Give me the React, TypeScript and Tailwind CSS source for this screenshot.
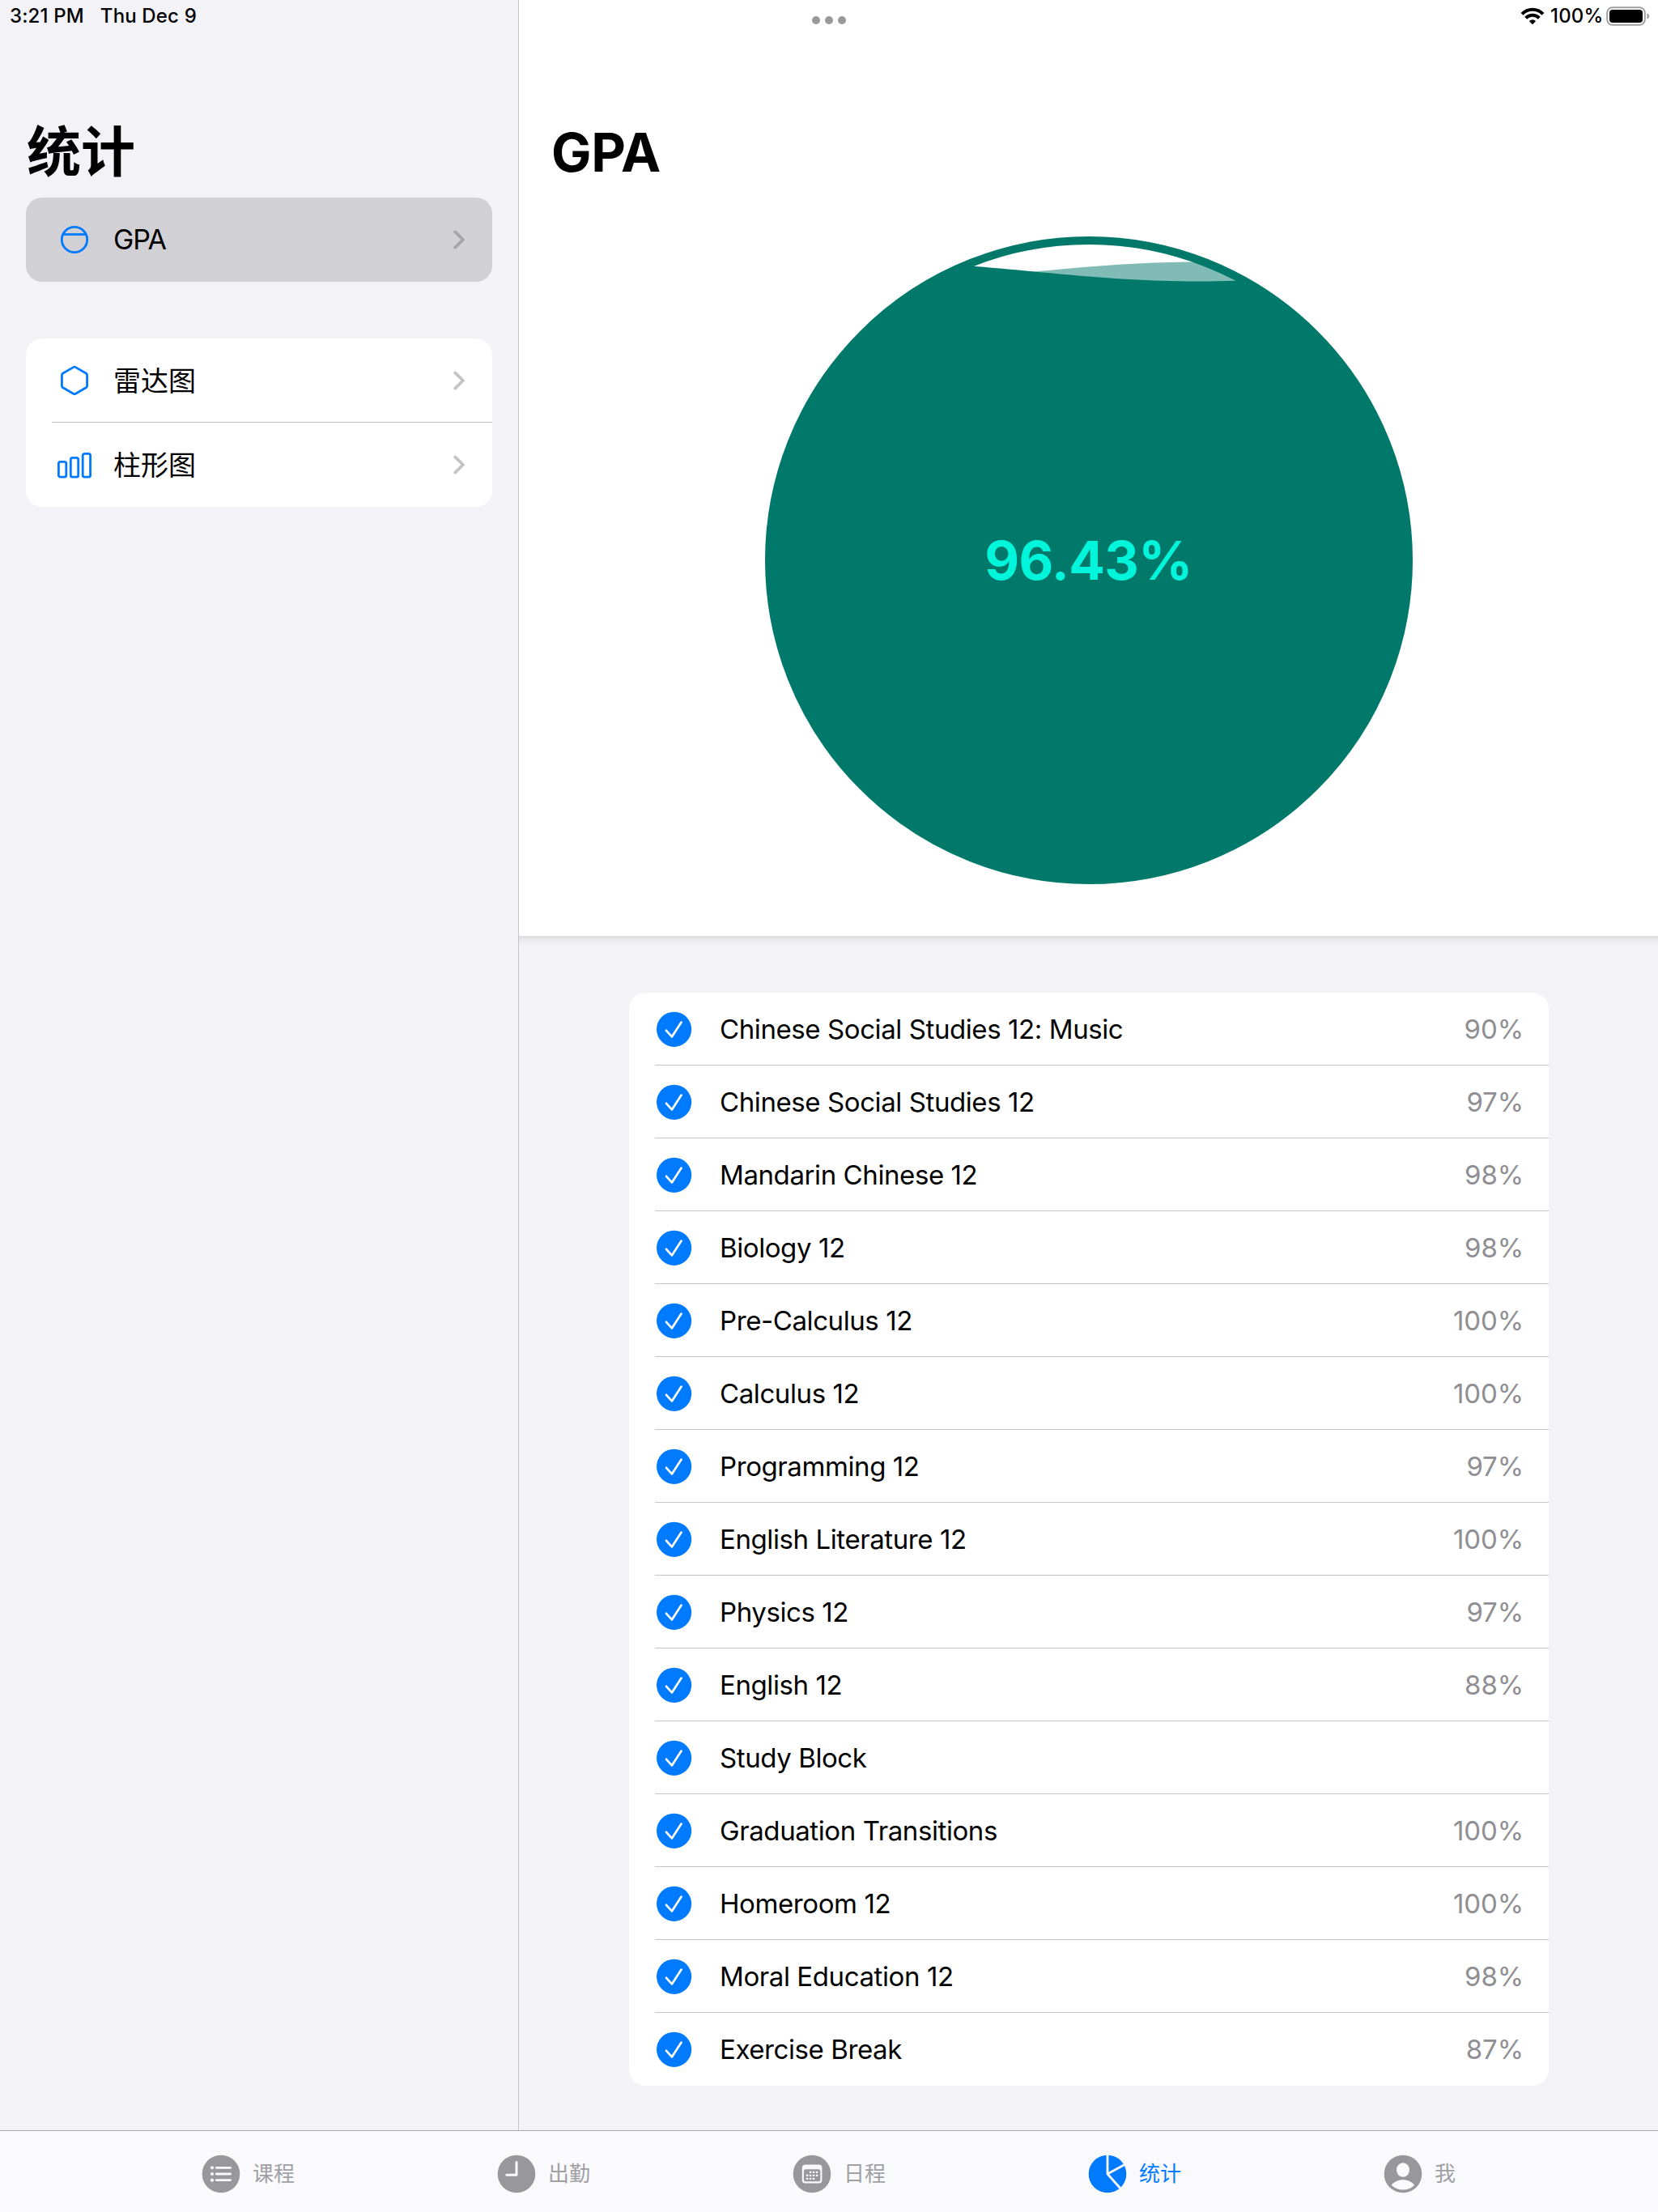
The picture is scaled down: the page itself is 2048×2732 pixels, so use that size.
import type { ReactNode } from "react";

const courses: [string, string][] = [
  ["Chinese Social Studies 12: Music", "90%"],
  ["Chinese Social Studies 12", "97%"],
  ["Mandarin Chinese 12", "98%"],
  ["Biology 12", "98%"],
  ["Pre-Calculus 12", "100%"],
  ["Calculus 12", "100%"],
  ["Programming 12", "97%"],
  ["English Literature 12", "100%"],
  ["Physics 12", "97%"],
  ["English 12", "88%"],
  ["Study Block", ""],
  ["Graduation Transitions", "100%"],
  ["Homeroom 12", "100%"],
  ["Moral Education 12", "98%"],
  ["Exercise Break", "87%"],
];

function Chevron({ color }: { color: string }) {
  return (
    <svg width="16" height="26" viewBox="0 0 16 26" fill="none" stroke={color} strokeWidth="3.8" strokeLinecap="round" strokeLinejoin="round">
      <path d="M2.2 3.4 L12 13 L2.2 22.6" />
    </svg>
  );
}

function CircleIcon() {
  return (
    <svg width="44" height="44" viewBox="0 0 44 44" fill="none" stroke="#007aff" strokeWidth="2.8">
      <circle cx="22" cy="22" r="15.7" />
      <path d="M8 15.5H36" />
    </svg>
  );
}

function HexagonIcon() {
  return (
    <svg width="44" height="44" viewBox="0 0 44 44" fill="none" stroke="#007aff" strokeWidth="2.8" strokeLinejoin="round">
      <path d="M20.6 5.6Q22 4.8 23.4 5.6L36.2 13Q37.6 13.8 37.6 15.4V28.4Q37.6 30 36.2 30.8L23.4 38.2Q22 39 20.6 38.2L7.8 30.8Q6.4 30 6.4 28.4V15.4Q6.4 13.8 7.8 13Z" />
    </svg>
  );
}

function BarsIcon() {
  return (
    <svg width="44" height="44" viewBox="0 0 44 44" fill="none" stroke="#007aff" strokeWidth="2.8">
      <rect x="2.4" y="18.3" width="9.4" height="18.9" rx="2.2" />
      <rect x="17.3" y="13.3" width="9.4" height="23.9" rx="2.2" />
      <rect x="32.2" y="8.3" width="9.4" height="28.9" rx="2.2" />
    </svg>
  );
}

function MenuRow({ icon, label, chevron }: { icon: ReactNode; label: ReactNode; chevron: string }) {
  return (
    <div className="flex h-[104px] items-center pl-[38px] pr-[32px]">
      {icon}
      <span className="ml-[26px] flex-1 text-[34px] leading-[48px]">{label}</span>
      <Chevron color={chevron} />
    </div>
  );
}

/* Liquid surface: a sine curve across the 800px bowl, closed at the bottom. */
function wavePath(amplitude: number) {
  const points: string[] = [];
  for (let x = 0; x <= 800; x += 10) {
    const y = 43.5 + amplitude * Math.sin((2 * Math.PI * (x - 333)) / 800);
    points.push(`${x} ${y.toFixed(2)}`);
  }
  return `M${points.join("L")}V800H0Z`;
}

function Gauge() {
  return (
    <svg width="800" height="800" viewBox="0 0 800 800">
      <defs>
        <clipPath id="bowl">
          <circle cx="400" cy="400" r="392" />
        </clipPath>
      </defs>
      <g clipPath="url(#bowl)">
        <path d={wavePath(-12)} fill="#80bcb5" />
        <path d={wavePath(12)} fill="#00796b" />
      </g>
      <circle cx="400" cy="400" r="395" fill="none" stroke="#00796b" strokeWidth="10" />
    </svg>
  );
}

function CheckIcon() {
  return (
    <svg width="44" height="44" viewBox="0 0 44 44" fill="none">
      <circle cx="21.6" cy="22.3" r="21.6" fill="#007aff" />
      <path d="M12 23.8L18.9 31.4L30.6 13.6" stroke="#fff" strokeWidth="2.7" strokeLinecap="round" strokeLinejoin="round" />
    </svg>
  );
}

const GRAY = "#98979c";
const BAR = "#fafafd";

function ListIcon() {
  return (
    <svg width="48" height="48" viewBox="0 0 48 48">
      <circle cx="24" cy="24" r="23.3" fill={GRAY} />
      {[16.3, 24, 31.7].map((y) => (
        <g key={y}>
          <circle cx="13" cy={y} r="2.1" fill={BAR} />
          <path d={`M18.3 ${y}H35.5`} stroke={BAR} strokeWidth="2.8" strokeLinecap="round" />
        </g>
      ))}
    </svg>
  );
}

function ClockIcon() {
  return (
    <svg width="48" height="48" viewBox="0 0 48 48">
      <circle cx="24" cy="24" r="23.3" fill={GRAY} />
      <path d="M24 9.5V25.3H11.8" fill="none" stroke={BAR} strokeWidth="3" strokeLinecap="round" strokeLinejoin="round" />
    </svg>
  );
}

function CalendarIcon() {
  const dots: [number, number][] = [
    [22, 22], [26, 22], [30, 22],
    [18, 26], [22, 26], [26, 26], [30, 26],
    [18, 30], [22, 30], [26, 30],
  ];
  return (
    <svg width="48" height="48" viewBox="0 0 48 48">
      <circle cx="24" cy="24" r="23.3" fill={GRAY} />
      <rect x="11.8" y="12.4" width="24.6" height="23" rx="4" fill={BAR} />
      <rect x="13.9" y="18.3" width="20.4" height="15" rx="2.2" fill={GRAY} />
      {dots.map(([x, y]) => (
        <rect key={`${x}-${y}`} x={x - 1.1} y={y - 1.2} width="2.3" height="2.3" rx="0.5" fill={BAR} />
      ))}
    </svg>
  );
}

function PieIcon() {
  return (
    <svg width="48" height="48" viewBox="0 0 48 48">
      <circle cx="24" cy="24" r="23.3" fill="#007aff" />
      <path d="M24 0V24L46 12M24 24L41 43" fill="none" stroke={BAR} strokeWidth="2.8" strokeLinejoin="round" />
    </svg>
  );
}

function PersonIcon() {
  return (
    <svg width="48" height="48" viewBox="0 0 48 48">
      <circle cx="24" cy="24" r="23.3" fill={GRAY} />
      <ellipse cx="24" cy="19" rx="8" ry="8.8" fill={BAR} />
      <path d="M9.8 37.8C13 33.8 18 31.3 24 31.3S35 33.8 38.2 37.8C34.8 41.5 29.8 43.6 24 43.6S13.2 41.5 9.8 37.8Z" fill={BAR} />
    </svg>
  );
}

const tabs: { label: string; icon: ReactNode; active?: boolean }[] = [
  { label: "课程", icon: <ListIcon /> },
  { label: "出勤", icon: <ClockIcon /> },
  { label: "日程", icon: <CalendarIcon /> },
  { label: "统计", icon: <PieIcon />, active: true },
  { label: "我", icon: <PersonIcon /> },
];

function StatusIcons() {
  return (
    <div className="flex h-[40px] items-center justify-end pr-[9px]">
      <svg width="30" height="22" viewBox="0 0 30 22" fill="none" stroke="#000" strokeWidth="4">
        <path d="M2 8.4C9.3 1 20.7 1 28 8.4" />
        <path d="M6.7 13.2C11.4 8.6 18.6 8.6 23.3 13.2" />
        <path d="M15 21.2L10.9 17Q15 13.6 19.1 17Z" fill="#000" stroke="none" />
      </svg>
      <span className="ml-[7px] w-[68px] text-[24px] font-medium leading-[40px] tracking-[0.2px]">100%</span>
      <svg width="56" height="26" viewBox="0 0 56 26">
        <rect x="2.2" y="2.2" width="46.6" height="21.6" rx="6.5" fill="none" stroke="#a0a0a0" strokeWidth="2" />
        <rect x="5" y="5" width="41" height="16" rx="4" fill="#000" />
        <path d="M51.5 9.3Q54.3 10.4 54.3 13T51.5 16.7Z" fill="#a0a0a0" />
      </svg>
    </div>
  );
}

export default function App() {
  return (
    <div className="flex h-[2732px] w-[2048px] flex-col overflow-hidden bg-[#f2f2f7] font-['Inter','Noto_Sans_CJK_SC',sans-serif] text-black">
      <div className="flex h-[2631px]">
        <aside className="w-[641px] shrink-0 border-r border-[#c6c6c8] px-[32px]">
          <div className="-ml-[20px] flex h-[40px] items-center gap-[20px] text-[24px] font-medium leading-[40px] tracking-[0.15px]">
            <span>3:21 PM</span>
            <span>Thu Dec 9</span>
          </div>
          <h1 className="ml-px mt-[100px] h-[104px] text-[67px] font-bold leading-[96px]">统计</h1>
          <div className="rounded-[20px] bg-[#d1d0d5]">
            <MenuRow icon={<CircleIcon />} label={<span className="tracking-[-1px]">GPA</span>} chevron="#a5a5aa" />
          </div>
          <div className="mt-[70px] rounded-[20px] bg-white">
            <MenuRow icon={<HexagonIcon />} label={<span className="relative top-px">雷达图</span>} chevron="#c4c4c6" />
            <div className="-mt-px ml-[32px] h-px bg-[#c6c6c8]" />
            <MenuRow icon={<BarsIcon />} label={<span className="relative top-px">柱形图</span>} chevron="#c4c4c6" />
          </div>
        </aside>
        <main className="flex-1">
          <section className="h-[1156px] bg-white shadow-[0_-20px_12px_20px_rgba(0,0,0,0.18)] [clip-path:inset(0_0_-20px_0)]">
            <div className="grid h-[40px] grid-cols-[766px_1fr]">
              <div className="flex justify-end gap-[6px] pr-[362px] pt-[20px]">
                <i className="size-[10px] rounded-full bg-[#999]" />
                <i className="size-[10px] rounded-full bg-[#999]" />
                <i className="size-[10px] rounded-full bg-[#999]" />
              </div>
              <StatusIcons />
            </div>
            <h1 className="ml-[40px] mt-[108px] h-[80px] text-[66px] font-bold leading-[80px] tracking-[-0.4px]">GPA</h1>
            <div className="mt-[64px] grid place-items-center">
              <div className="col-start-1 row-start-1 h-[800px]">
                <Gauge />
              </div>
              <span className="col-start-1 row-start-1 text-[66px] font-bold leading-[80px] tracking-[-0.6px] text-[#00f5da]">96.43%</span>
            </div>
          </section>
          <div className="ml-[136px] mt-[70px] w-[1136px] rounded-[20px] bg-white pl-[32px]">
            {courses.map(([name, score], i) => (
              <div
                key={name}
                className={
                  i < courses.length - 1
                    ? "flex h-[90px] items-center border-b border-[#c6c6c8] pr-[31px]"
                    : "flex h-[90px] items-center pr-[31px]"
                }
              >
                <div className="ml-[2px]">
                  <CheckIcon />
                </div>
                <span className="ml-[34px] flex-1 text-[33px] leading-[44px] tracking-[-0.41px]">{name}</span>
                <span className="text-[33px] leading-[44px] tracking-[-0.1px] text-[#8e8e93]">{score}</span>
              </div>
            ))}
          </div>
        </main>
      </div>
      <nav className="flex h-[101px] border-t border-[#a9a8ae] bg-[#fafafd] pl-[249px] pt-[29px]">
        {tabs.map((t) => (
          <div key={t.label} className="flex h-[48px] w-[365px] shrink-0 items-center last:w-auto">
            {t.icon}
            <span
              className={
                t.active
                  ? "ml-[15px] text-[26px] leading-[48px] text-[#007aff]"
                  : "ml-[15px] text-[26px] leading-[48px] text-[#a09fa4]"
              }
            >
              {t.label}
            </span>
          </div>
        ))}
      </nav>
    </div>
  );
}
